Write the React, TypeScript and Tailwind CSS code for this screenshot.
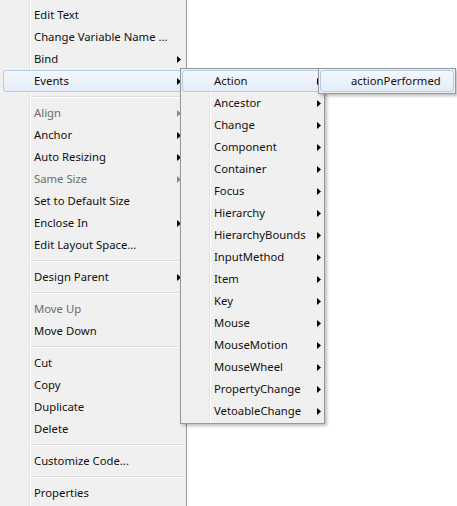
import React from "react";

type Item =
  | { sep: true }
  | { label: string; sub?: boolean; disabled?: boolean; hl?: boolean };

const mainItems: Item[] = [
  { label: "Edit Text" },
  { label: "Change Variable Name ..." },
  { label: "Bind", sub: true },
  { label: "Events", sub: true, hl: true },
  { sep: true },
  { label: "Align", sub: true, disabled: true },
  { label: "Anchor", sub: true },
  { label: "Auto Resizing", sub: true },
  { label: "Same Size", sub: true, disabled: true },
  { label: "Set to Default Size" },
  { label: "Enclose In", sub: true },
  { label: "Edit Layout Space..." },
  { sep: true },
  { label: "Design Parent", sub: true },
  { sep: true },
  { label: "Move Up", disabled: true },
  { label: "Move Down" },
  { sep: true },
  { label: "Cut" },
  { label: "Copy" },
  { label: "Duplicate" },
  { label: "Delete" },
  { sep: true },
  { label: "Customize Code..." },
  { sep: true },
  { label: "Properties" },
];

const eventItems = [
  "Action",
  "Ancestor",
  "Change",
  "Component",
  "Container",
  "Focus",
  "Hierarchy",
  "HierarchyBounds",
  "InputMethod",
  "Item",
  "Key",
  "Mouse",
  "MouseMotion",
  "MouseWheel",
  "PropertyChange",
  "VetoableChange",
];

function Arrow({ disabled }: { disabled?: boolean }) {
  return (
    <svg width="4" height="7" viewBox="0 0 4 7" className="shrink-0">
      <path d="M0 0 L4 3.5 L0 7 Z" fill={disabled ? "#8a8a8a" : "#000"} />
    </svg>
  );
}

function Row({
  label,
  sub,
  disabled,
  hl,
  textPad,
}: {
  label: string;
  sub?: boolean;
  disabled?: boolean;
  hl?: boolean;
  textPad: string;
}) {
  return (
    <div
      className={
        "h-[22px] flex items-center rounded-[3px] border " +
        (hl
          ? "border-[#b4cbe8] bg-[linear-gradient(#f4f8fd,#e3ecf7)] "
          : "border-transparent ")
      }
    >
      <span
        className={
          textPad +
          " flex-1 whitespace-nowrap leading-none " +
          (disabled ? "text-[#6d6d6d]" : "text-[#111]")
        }
      >
        {label}
      </span>
      {sub && (
        <span className="pr-[1px]">
          <Arrow disabled={disabled} />
        </span>
      )}
    </div>
  );
}

export default function App() {
  return (
    <div
      className="relative w-[457px] h-[506px] bg-white overflow-hidden text-[11.3px]"
      style={{ fontFamily: '"Noto Sans", "Open Sans", sans-serif' }}
    >
      {/* main menu */}
      <div className="w-[187px] h-[520px] border-r border-[#979797] pl-[3px] pr-[3px] pt-[4px] bg-[linear-gradient(to_right,#f0f0f0_29px,#e2e3e3_29px,#e2e3e3_30px,#ffffff_30px,#ffffff_31px,#f0f0f0_31px)]">
        {mainItems.map((it, i) =>
          "sep" in it ? (
            <div key={i} className="h-[10px] flex flex-col justify-center pl-[28px]">
              <div className="h-px bg-[#dedede]" />
              <div className="h-px bg-white" />
            </div>
          ) : (
            <Row key={i} {...it} textPad="pl-[30px]" />
          )
        )}
      </div>

      {/* Events submenu */}
      <div className="absolute left-[180px] top-[68px] w-[145px] border border-[#979797] px-[1px] py-[1px] shadow-[2px_2px_3px_rgba(0,0,0,0.25)] bg-[linear-gradient(to_right,#f0f0f0_28px,#e2e3e3_28px,#e2e3e3_29px,#ffffff_29px,#ffffff_30px,#f0f0f0_30px)]">
        {eventItems.map((l, i) => (
          <Row key={l} label={l} sub hl={i === 0} textPad="pl-[31px]" />
        ))}
      </div>

      {/* Action submenu */}
      <div className="absolute left-[318px] top-[68px] w-[138px] border border-[#979797] px-[1px] py-[1px] shadow-[2px_2px_3px_rgba(0,0,0,0.25)] bg-[#f0f0f0]">
        <Row label="actionPerformed" hl textPad="pl-[30px]" />
      </div>
    </div>
  );
}
